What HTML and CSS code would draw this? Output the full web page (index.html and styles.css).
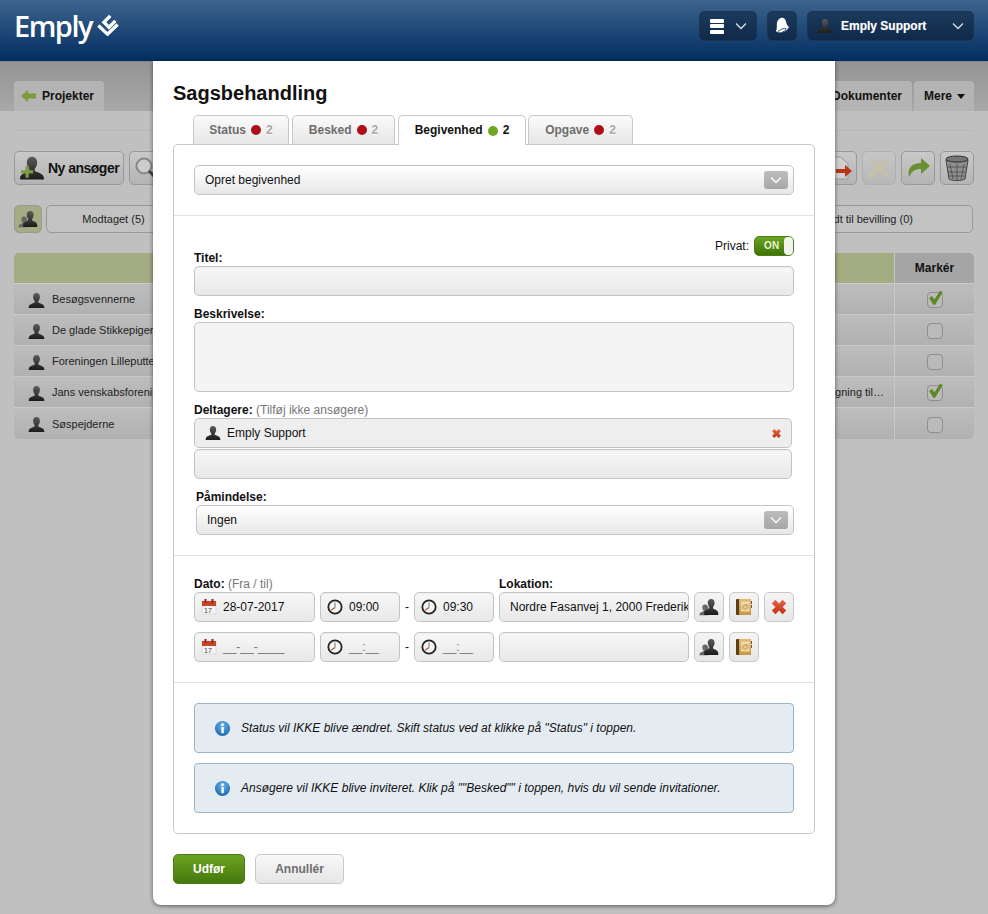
FILE: index.html
```html
<!DOCTYPE html>
<html lang="da">
<head>
<meta charset="utf-8">
<title>Sagsbehandling</title>
<link rel="stylesheet" href="styles.css">
</head>
<body>
<svg class="defs" width="0" height="0" aria-hidden="true">
  <defs>
    <linearGradient id="gx" x1="0" y1="0" x2="0" y2="1"><stop offset="0" stop-color="#e8684a"/><stop offset="1" stop-color="#c42c12"/></linearGradient>
    <linearGradient id="gbook" x1="0" y1="0" x2="0" y2="1"><stop offset="0" stop-color="#e2bb72"/><stop offset="1" stop-color="#c8964a"/></linearGradient>
    <linearGradient id="gperson" x1="0" y1="0" x2="0" y2="1"><stop offset="0" stop-color="#5a5a5a"/><stop offset="1" stop-color="#1c1c1c"/></linearGradient>
    <radialGradient id="ginfo" cx=".5" cy=".3" r=".8"><stop offset="0" stop-color="#6db3e8"/><stop offset="1" stop-color="#0f5ea8"/></radialGradient>
    <symbol id="person" viewBox="0 0 24 24"><path fill="url(#gperson)" d="M12 1.500c-3 0-4.800 2.300-4.800 5.300 0 2.500 1 4.700 2.200 5.800v2.200c-2 1.300-8 2-8.400 6.200v1.500h22v-1.500c-.4-4.200-6.400-4.900-8.400-6.200v-2.200c1.200-1.100 2.200-3.300 2.200-5.800 0-3-1.800-5.300-4.800-5.300z"/></symbol>
    <symbol id="group" viewBox="0 0 24 24"><path fill="#666" d="M7 9c-2 0-3 1.500-3 3.300 0 1.600.6 2.900 1.400 3.600v1.300c-1.300.8-4.400 1.200-4.800 3.800v1h11v-7.500c-.4-3.500-2-5.500-4.600-5.500z"/><path fill="url(#gperson)" d="M14.500 2.500c-2.500 0-4 2-4 4.500 0 2.100.8 4 1.800 4.900v1.900c-1.700 1.100-5.800 1.700-6.200 5.300v2.400h17v-2.400c-.4-3.600-4.500-4.200-6.200-5.300v-1.900c1-.9 1.800-2.800 1.800-4.900 0-2.500-1.500-4.500-4-4.500z"/></symbol>
    <symbol id="book" viewBox="0 0 16 18"><rect x="0" y="1" width="15" height="16" rx="1" fill="#5e4018"/><rect x="3" y="1" width="12" height="16" rx="1" fill="url(#gbook)"/><rect x="5" y="3.500" width="8.500" height="10" fill="#f2dca8"/><text x="9.200" y="11" font-size="8" text-anchor="middle" fill="#b5853c" font-family="Liberation Sans">@</text><rect x="15" y="3" width="1" height="3" fill="#7c5a28"/><rect x="15" y="7" width="1" height="3" fill="#7c5a28"/></symbol>
    <symbol id="cross" viewBox="0 0 20 20"><path fill="url(#gx)" d="M6 2l4 4 4-4 4 4-4 4 4 4-4 4-4-4-4 4-4-4 4-4-4-4z"/></symbol>
    <symbol id="clock" viewBox="0 0 18 18"><circle cx="9" cy="9" r="7.500" fill="#f4f4f4" stroke="#222" stroke-width="2"/><path d="M9 9.500L9 4" stroke="#666" stroke-width="1" fill="none"/><path d="M9 9.500L4.800 12.500" stroke="#c0392b" stroke-width="1.300" fill="none"/></symbol>
    <symbol id="calendar" viewBox="0 0 16 16"><rect x="1" y="2" width="14" height="13" fill="#f4f4f4" stroke="#ccc" stroke-width=".5"/><rect x="1" y="2" width="14" height="5" fill="#c8452a"/><rect x="3.500" y="0" width="2" height="4" fill="#8e2c18"/><rect x="10.500" y="0" width="2" height="4" fill="#8e2c18"/><text x="3" y="13.800" font-size="7" fill="#444" font-family="Liberation Sans">17</text></symbol>
    <symbol id="check" viewBox="0 0 20 20"><path fill="#5b8a22" d="M1.500 10l3.500-2.500 3 4.500L15 1l3.500 1.500L9 18.500H6.500z"/></symbol>
    <symbol id="chev" viewBox="0 0 12 8"><path d="M1 1.500l5 5 5-5" fill="none" stroke="currentColor" stroke-width="1.300"/></symbol>
    <symbol id="info" viewBox="0 0 18 18"><circle cx="9" cy="9" r="8" fill="url(#ginfo)"/><rect x="7.800" y="7.500" width="2.600" height="6.500" fill="#fff"/><circle cx="9" cy="5" r="1.500" fill="#fff"/></symbol>
  </defs>
</svg>

<header class="topbar">
  <div class="logo"><span class="logo-text">Emply</span>
    <svg class="logo-mark" viewBox="0 0 24 24" width="22" height="22"><g fill="none" stroke="#fff" stroke-width="3.600"><path d="M1.500 12.500L11.500 22 22.500 11.500"/><path d="M14.500 2L7.500 9 13 14.500 20 7.500"/></g></svg>
  </div>
  <nav class="top-actions">
    <button class="top-btn top-menu">
      <span class="stack"><i></i><i></i><i></i></span>
      <svg class="top-chev" width="12" height="8"><use href="#chev"/></svg>
    </button>
    <button class="top-btn top-bell">
      <svg width="15" height="18" viewBox="0 0 15 18"><path fill="#fff" d="M5.500 1c2.500-1 5 .5 5.500 3.500.3 2.300 1 4 3 5.500-1 2-3 4.500-7 5.500-2.500.6-5.500 0-6-1.500.8-1.500 1-3.500.8-6-.2-3 1.200-5.800 3.700-7z"/><ellipse cx="7" cy="13.700" rx="4.500" ry="1.500" transform="rotate(-25 7 13.700)" fill="none" stroke="#1d3a5c" stroke-width=".8"/></svg>
    </button>
    <button class="top-btn top-user">
      <svg width="16" height="16"><use href="#person"/></svg>
      <span class="top-user-name">Emply Support</span>
      <svg class="top-chev" width="12" height="8"><use href="#chev"/></svg>
    </button>
  </nav>
</header>

<main class="backdrop">
  <div class="subnav">
    <a class="subtab subtab-back">
      <svg width="16" height="14" viewBox="0 0 16 14"><path d="M0 7l7-6v3.500h8v5H7V13z" fill="#7b9a3a"/></svg>
      Projekter
    </a>
    <span class="subnav-fill"></span>
    <a class="subtab">Dokumenter</a>
    <a class="subtab subtab-more">Mere <i class="caret"></i></a>
  </div>
  <div class="rule"></div>
  <div class="toolbar">
    <button class="tool tool-new">
      <svg width="26" height="26" viewBox="0 0 24 24"><use href="#person"/><path d="M2 14h4v-4h3v4h4v3H9v4H6v-4H2z" fill="#7c9a44"/></svg>
      Ny ansøger
    </button>
    <button class="tool tool-icon">
      <svg width="24" height="24" viewBox="0 0 24 24"><circle cx="10" cy="10" r="7.500" fill="#ccc" stroke="#888" stroke-width="2"/><path d="M15 15l7 7" stroke="#444" stroke-width="3"/></svg>
    </button>
    <span class="subnav-fill"></span>
    <button class="tool tool-icon">
      <svg width="26" height="26" viewBox="0 0 26 26"><path d="M4 2h10l7 7v15H4z" fill="#cfcfcf" stroke="#999"/><path d="M9 14h9v-4l7 6-7 6v-4H9z" fill="#b5351f"/></svg>
    </button>
    <button class="tool tool-icon tool-dim">
      <svg width="26" height="26" viewBox="0 0 26 26"><path d="M4 7l3-3 16 16-3 3z" fill="#c9bfa4"/><path d="M19 3l4 3-16 17-5 1 1-5z" fill="#c9bfa4"/></svg>
    </button>
    <button class="tool tool-icon">
      <svg width="26" height="26" viewBox="0 0 26 26"><path d="M4 22c-2-9 3-14 12-14V3l9 8-9 8v-5c-6 0-9 2-12 8z" fill="#6c8f34"/></svg>
    </button>
    <button class="tool tool-icon">
      <svg width="26" height="28" viewBox="0 0 26 28"><ellipse cx="13" cy="5" rx="11" ry="3" fill="#777" stroke="#333"/><path d="M2 6l3 19c2 2 14 2 16 0l3-19c-4 3-18 3-22 0z" fill="#8f8f8f" stroke="#444"/><path d="M6 10l3 15M13 10v16M20 10l-3 15M3 13h20M4 18h18M5 22h16" stroke="#4c4c4c" stroke-width=".8"/></svg>
    </button>
  </div>
  <div class="statusbar">
    <button class="status-icon"><svg width="20" height="20"><use href="#group"/></svg></button>
    <button class="status-pill status-first">Modtaget (5)</button>
    <span class="subnav-fill"></span>
    <button class="status-pill status-last">Godkendt til bevilling (0)</button>
  </div>
  <div class="grid">
    <div class="grid-head"><div class="grid-main"></div><div class="grid-mark">Markér</div></div>
    <div class="grid-row"><div class="grid-main"><svg width="17" height="17"><use href="#person"/></svg>Besøgsvennerne</div><div class="grid-mark"><span class="box box-on"><svg width="16" height="16"><use href="#check"/></svg></span></div></div>
    <div class="grid-row"><div class="grid-main"><svg width="17" height="17"><use href="#person"/></svg>De glade Stikkepiger</div><div class="grid-mark"><span class="box"></span></div></div>
    <div class="grid-row"><div class="grid-main"><svg width="17" height="17"><use href="#person"/></svg>Foreningen Lilleputterne</div><div class="grid-mark"><span class="box"></span></div></div>
    <div class="grid-row"><div class="grid-main"><svg width="17" height="17"><use href="#person"/></svg>Jans venskabsforening<span class="grid-note">Ansøgning til…</span></div><div class="grid-mark"><span class="box box-on"><svg width="16" height="16"><use href="#check"/></svg></span></div></div>
    <div class="grid-row grid-row-last"><div class="grid-main"><svg width="17" height="17"><use href="#person"/></svg>Søspejderne</div><div class="grid-mark"><span class="box"></span></div></div>
  </div>
</main>

<section class="modal">
  <h1 class="modal-title">Sagsbehandling</h1>
  <div class="tabs">
    <a class="tab tab-status">Status <i class="dot"></i> <span class="count">2</span></a>
    <a class="tab tab-besked">Besked <i class="dot"></i> <span class="count">2</span></a>
    <a class="tab tab-active">Begivenhed <i class="dot dot-green"></i> <span class="count">2</span></a>
    <a class="tab tab-opgave">Opgave <i class="dot"></i> <span class="count">2</span></a>
  </div>
  <div class="panel">
    <div class="section section-type">
      <div class="field select">Opret begivenhed<span class="select-arrow"><svg width="12" height="8"><use href="#chev"/></svg></span></div>
    </div>
    <div class="section section-main">
      <div class="private"><span>Privat:</span><span class="toggle"><b>ON</b><i></i></span></div>
      <label class="label label-title">Titel:</label>
      <div class="field input"></div>
      <label class="label label-gap">Beskrivelse:</label>
      <div class="field area"></div>
      <label class="label label-gap">Deltagere: <small>(Tilføj ikke ansøgere)</small></label>
      <div class="field tag"><svg width="16" height="16"><use href="#person"/></svg><span class="tag-name">Emply Support</span><svg class="tag-x" width="11" height="11"><use href="#cross"/></svg></div>
      <div class="field input tag-input"></div>
      <div class="reminder">
        <label class="label">Påmindelse:</label>
        <div class="field select">Ingen<span class="select-arrow"><svg width="12" height="8"><use href="#chev"/></svg></span></div>
      </div>
    </div>
    <div class="section section-when">
      <div class="when-labels">
        <label class="label when-date">Dato: <small>(Fra / til)</small></label>
        <label class="label">Lokation:</label>
      </div>
      <div class="when-row">
        <div class="field input date"><svg width="16" height="16"><use href="#calendar"/></svg>28-07-2017</div>
        <div class="field input time"><svg width="16" height="16"><use href="#clock"/></svg>09:00</div>
        <span class="dash">-</span>
        <div class="field input time"><svg width="16" height="16"><use href="#clock"/></svg>09:30</div>
        <input class="field input location" value="Nordre Fasanvej 1, 2000 Frederiksberg">
        <button class="icon-btn"><svg width="20" height="20"><use href="#group"/></svg></button>
        <button class="icon-btn"><svg width="16" height="18"><use href="#book"/></svg></button>
        <button class="icon-btn"><svg width="18" height="18"><use href="#cross"/></svg></button>
      </div>
      <div class="when-row">
        <div class="field input date ph"><svg width="16" height="16"><use href="#calendar"/></svg>__-__-____</div>
        <div class="field input time ph"><svg width="16" height="16"><use href="#clock"/></svg>__:__</div>
        <span class="dash">-</span>
        <div class="field input time ph"><svg width="16" height="16"><use href="#clock"/></svg>__:__</div>
        <div class="field input location"></div>
        <button class="icon-btn"><svg width="20" height="20"><use href="#group"/></svg></button>
        <button class="icon-btn"><svg width="16" height="18"><use href="#book"/></svg></button>
      </div>
    </div>
    <div class="section section-notes">
      <div class="note"><svg width="17" height="17"><use href="#info"/></svg>Status vil IKKE blive ændret. Skift status ved at klikke på "Status" i toppen.</div>
      <div class="note"><svg width="17" height="17"><use href="#info"/></svg>Ansøgere vil IKKE blive inviteret. Klik på ""Besked"" i toppen, hvis du vil sende invitationer.</div>
    </div>
  </div>
  <div class="modal-actions">
    <button class="btn btn-primary">Udfør</button>
    <button class="btn btn-cancel">Annullér</button>
  </div>
</section>
</body>
</html>
```

FILE: styles.css
```css
* { box-sizing: border-box; }
html, body { margin: 0; height: 914px; overflow: hidden; }
body {
  position: relative;
  background: #c0c0c0;
  font: 12px/1.2 "Liberation Sans", Arial, sans-serif;
  color: #111;
}
button, input { font: inherit; color: inherit; padding: 0; }
.defs { position: absolute; }

/* top bar */
.topbar {
  height: 61px;
  display: flex;
  align-items: flex-start;
  justify-content: space-between;
  padding: 11px 14px 0;
  background: linear-gradient(#3d648d, #012d60);
}
.logo { display: flex; align-items: center; color: #fff; height: 30px; }
.logo-text { font: 600 29px/30px "Open Sans", sans-serif; letter-spacing: -1.500px; }
.logo-mark { margin: 0 0 2px 5px; }
.top-actions { display: flex; gap: 10px; }
.top-btn {
  height: 30px;
  display: flex;
  align-items: center;
  border: 1px solid #1b3655;
  border-radius: 5px;
  background: linear-gradient(#1b3a5c, #10294a);
  color: #fff;
}
.top-menu { width: 58px; padding-left: 10px; gap: 11px; }
.stack { display: flex; flex-direction: column; gap: 1.500px; }
.stack i { width: 14px; height: 4px; border-radius: 1px; background: #fff; display: block; }
.top-chev { color: #d8e0ea; }
.top-bell { width: 30px; justify-content: center; }
.top-user { width: 167px; padding-left: 9px; }
.top-user svg:first-child { margin-right: 8px; }
.top-user-name { font-weight: 700; width: 107px; text-align: left; white-space: nowrap; text-shadow: 0 0 1px rgba(255,255,255,.4); }
.top-user .top-chev { margin-left: 4px; }

/* dimmed page */
.subnav {
  height: 50px;
  display: flex;
  align-items: flex-end;
  gap: 2px;
  padding: 0 14px;
  background: linear-gradient(#949494, #a8a8a8);
  border-top: 1px solid #888;
}
.subnav-fill { flex: 1; }
.subtab {
  height: 30px;
  display: flex;
  align-items: center;
  gap: 5px;
  padding: 0 10px;
  border-radius: 4px 4px 0 0;
  background: #b4b4b4;
  font-weight: 700;
}
.subtab-back { width: 90px; padding-left: 7px; }
.subtab-more { width: 60px; }
.caret { width: 0; height: 0; border: 4px solid transparent; border-top: 5px solid #111; border-bottom: 0; }
.rule { height: 1px; margin: 19px 14px 0; background: #b8b8b8; }
.toolbar { display: flex; gap: 5px; padding: 20px 14px 0; height: 54px; }
.tool {
  height: 34px;
  display: flex;
  align-items: center;
  justify-content: center;
  border: 1px solid #999;
  border-radius: 5px;
  background: linear-gradient(#c9c9c9, #b4b4b4);
}
.tool-new { width: 110px; gap: 3px; font-size: 14px; font-weight: 700; letter-spacing: -.5px; }
.tool-icon { width: 34px; }
.tool-dim { opacity: .7; border-color: #aaa; }
.statusbar { display: flex; gap: 4px; padding: 20px 15px 0 14px; height: 68px; }
.status-icon {
  width: 28px; height: 28px;
  display: flex; align-items: center; justify-content: center;
  border: 1px solid #999; border-radius: 5px;
  background: #a3ac82;
}
.status-pill {
  height: 28px;
  padding-top: 1px;
  border: 1px solid #999;
  border-radius: 5px;
  background: #c2c2c2;
  font-size: 11px;
  color: #222;
}
.status-first { width: 135px; }
.status-last { width: 238px; }
.grid { margin: 0 14px; }
.grid-head { height: 31px; display: flex; border-radius: 5px 5px 0 0; overflow: hidden; border-bottom: 1px solid #cbcbcb; }
.grid-head .grid-main { background: #a3ac82; }
.grid-head .grid-mark { background: #a5a5a5; font-weight: 700; color: #111; }
.grid-main { flex: 1; display: flex; align-items: center; }
.grid-mark { width: 80px; display: flex; align-items: center; justify-content: center; border-left: 1px solid #c8c8c8; }
.grid-row { height: 31px; display: flex; background: linear-gradient(#bdbdbd, #b1b1b1); border-bottom: 1px solid #c9c9c9; font-size: 11px; color: #222; }
.grid-row .grid-main, .grid-row .grid-mark { padding-top: 2px; }
.grid-row-last { border-radius: 0 0 5px 5px; border-bottom: 0; }
.grid-row .grid-main svg { margin: 0 7px 0 14px; flex: none; }
.grid-note { margin-left: auto; padding-right: 10px; }
.box { width: 16px; height: 16px; border: 1px solid #8f8f8f; border-radius: 4px; background: #bababa; position: relative; display: block; }
.box svg { position: absolute; left: 0; top: -3px; }

/* modal */
.modal {
  position: absolute;
  left: 153px; top: 61px;
  width: 682px; height: 844px;
  padding: 20px 20px 0;
  background: #fff;
  border-radius: 0 0 8px 8px;
  box-shadow: 0 1px 4px rgba(0, 0, 0, .55);
}
.modal-title { margin: 0; font-size: 20px; line-height: 24px; font-weight: 700; color: #111; }
.tabs { display: flex; gap: 3px; padding-left: 20px; margin-top: 10px; height: 30px; position: relative; }
.tab {
  height: 29px;
  display: flex;
  align-items: center;
  justify-content: center;
  gap: 5px;
  border: 1px solid #c8c8c8;
  border-bottom: 0;
  border-radius: 5px 5px 0 0;
  background: linear-gradient(#fbfbfb, #e6e6e6);
  font-weight: 700;
  color: #6d6d6d;
}
.tab-status { width: 96px; }
.tab-besked { width: 103px; }
.tab-active { width: 128px; height: 30px; background: #fff; color: #111; position: relative; z-index: 1; }
.tab-opgave { width: 105px; margin-left: -1px; }
.dot { width: 10px; height: 10px; border-radius: 50%; background: #ad0f18; display: block; }
.dot-green { background: #6fa723; }
.count { color: #a9a9a9; text-shadow: 0 1px 0 #fff; }
.tab-active .count { color: #111; }
.panel { height: 690px; margin-top: -1px; border: 1px solid #c8c8c8; border-radius: 5px; }
.section { padding: 0 20px; border-bottom: 1px solid #e2e2e2; }
.section:last-child { border-bottom: 0; }
.section-type { height: 71px; padding-top: 20px; }
.section-main { height: 340px; padding-top: 20px; }
.section-when { height: 127px; padding-top: 21px; }
.section-notes { padding-top: 20px; display: flex; flex-direction: column; gap: 10px; }
.label { display: block; font-weight: 700; line-height: 14px; color: #111; }
.label small { font-size: 12px; font-weight: 400; color: #777; }
.field {
  height: 30px;
  border: 1px solid #c4c4c4;
  border-radius: 5px;
  display: flex;
  align-items: center;
  color: #111;
}
.select { position: relative; padding-left: 10px; background: linear-gradient(#fff, #e7e7e7); }
.select-arrow {
  position: absolute;
  right: 5px; top: 5px;
  width: 24px; height: 18px;
  display: flex; align-items: center; justify-content: center;
  border-radius: 3px;
  background: linear-gradient(#bdbdbd, #a6a6a6);
  color: #fff;
}
.input { background: linear-gradient(#f7f7f7, #e8e8e8); box-shadow: inset 0 1px 1px rgba(0,0,0,.04); }
.area { height: 70px; background: #f4f4f4; }
.tag { width: 598px; background: #eee; padding-left: 10px; }
.tag-name { margin-left: 6px; }
.tag-x { margin-left: auto; margin-right: 9px; }
.tag-input { width: 598px; margin-top: 1px; }
.private { display: flex; justify-content: flex-end; align-items: center; gap: 5px; height: 20px; }
.toggle {
  width: 40px; height: 20px;
  display: block;
  position: relative;
  border-radius: 5px;
  border: 1px solid #4e7f14;
  background: linear-gradient(#68a422, #3f7408);
  color: #e8f4d4;
  font-size: 10px;
  line-height: 18px;
  padding-left: 9px;
}
.toggle b { letter-spacing: .3px; }
.toggle i { position: absolute; right: 0; top: 0; bottom: 0; width: 9px; border-radius: 4px; background: #f2f2f2; }
.label-title { margin-top: -6px; line-height: 16px; height: 16px; }
.label-gap { margin-top: 10px; margin-bottom: 3px; height: 13px; line-height: 16px; }
.reminder { margin: 9px 0 0 2px; padding-top: 2px; }
.reminder .label { margin-bottom: 1px; height: 14px; }
.when-labels { display: flex; height: 15px; }
.when-date { width: 305px; }
.when-row { display: flex; align-items: center; gap: 5px; margin-bottom: 10px; }
.when-row .field { flex: none; padding-left: 6px; gap: 6px; }
.date { width: 121px; }
.time { width: 80px; }
.dash { width: 4px; display: flex; justify-content: center; }
.when-row .location { width: 190px; padding: 0 0 0 10px; outline: none; }
.icon-btn {
  width: 30px; height: 30px;
  display: flex; align-items: center; justify-content: center;
  border: 1px solid #c8c8c8;
  border-radius: 5px;
  background: linear-gradient(#f4f4f4, #e6e6e6);
}
.ph { color: #777; }
.note {
  height: 50px;
  display: flex;
  align-items: center;
  gap: 10px;
  padding-left: 19px;
  border: 1px solid #9ab5c6;
  border-radius: 4px;
  background: #e4ecf2;
  font-style: italic;
  color: #111;
}
.modal-actions { display: flex; gap: 10px; margin-top: 20px; }
.btn { height: 30px; border-radius: 5px; font-weight: 700; }
.btn-primary { width: 72px; border: 1px solid #4a7a12; background: linear-gradient(#6da321, #44780c); color: #fff; }
.btn-cancel { width: 89px; border: 1px solid #c8c8c8; background: linear-gradient(#f8f8f8, #e6e6e6); color: #6d6d6d; }
```
